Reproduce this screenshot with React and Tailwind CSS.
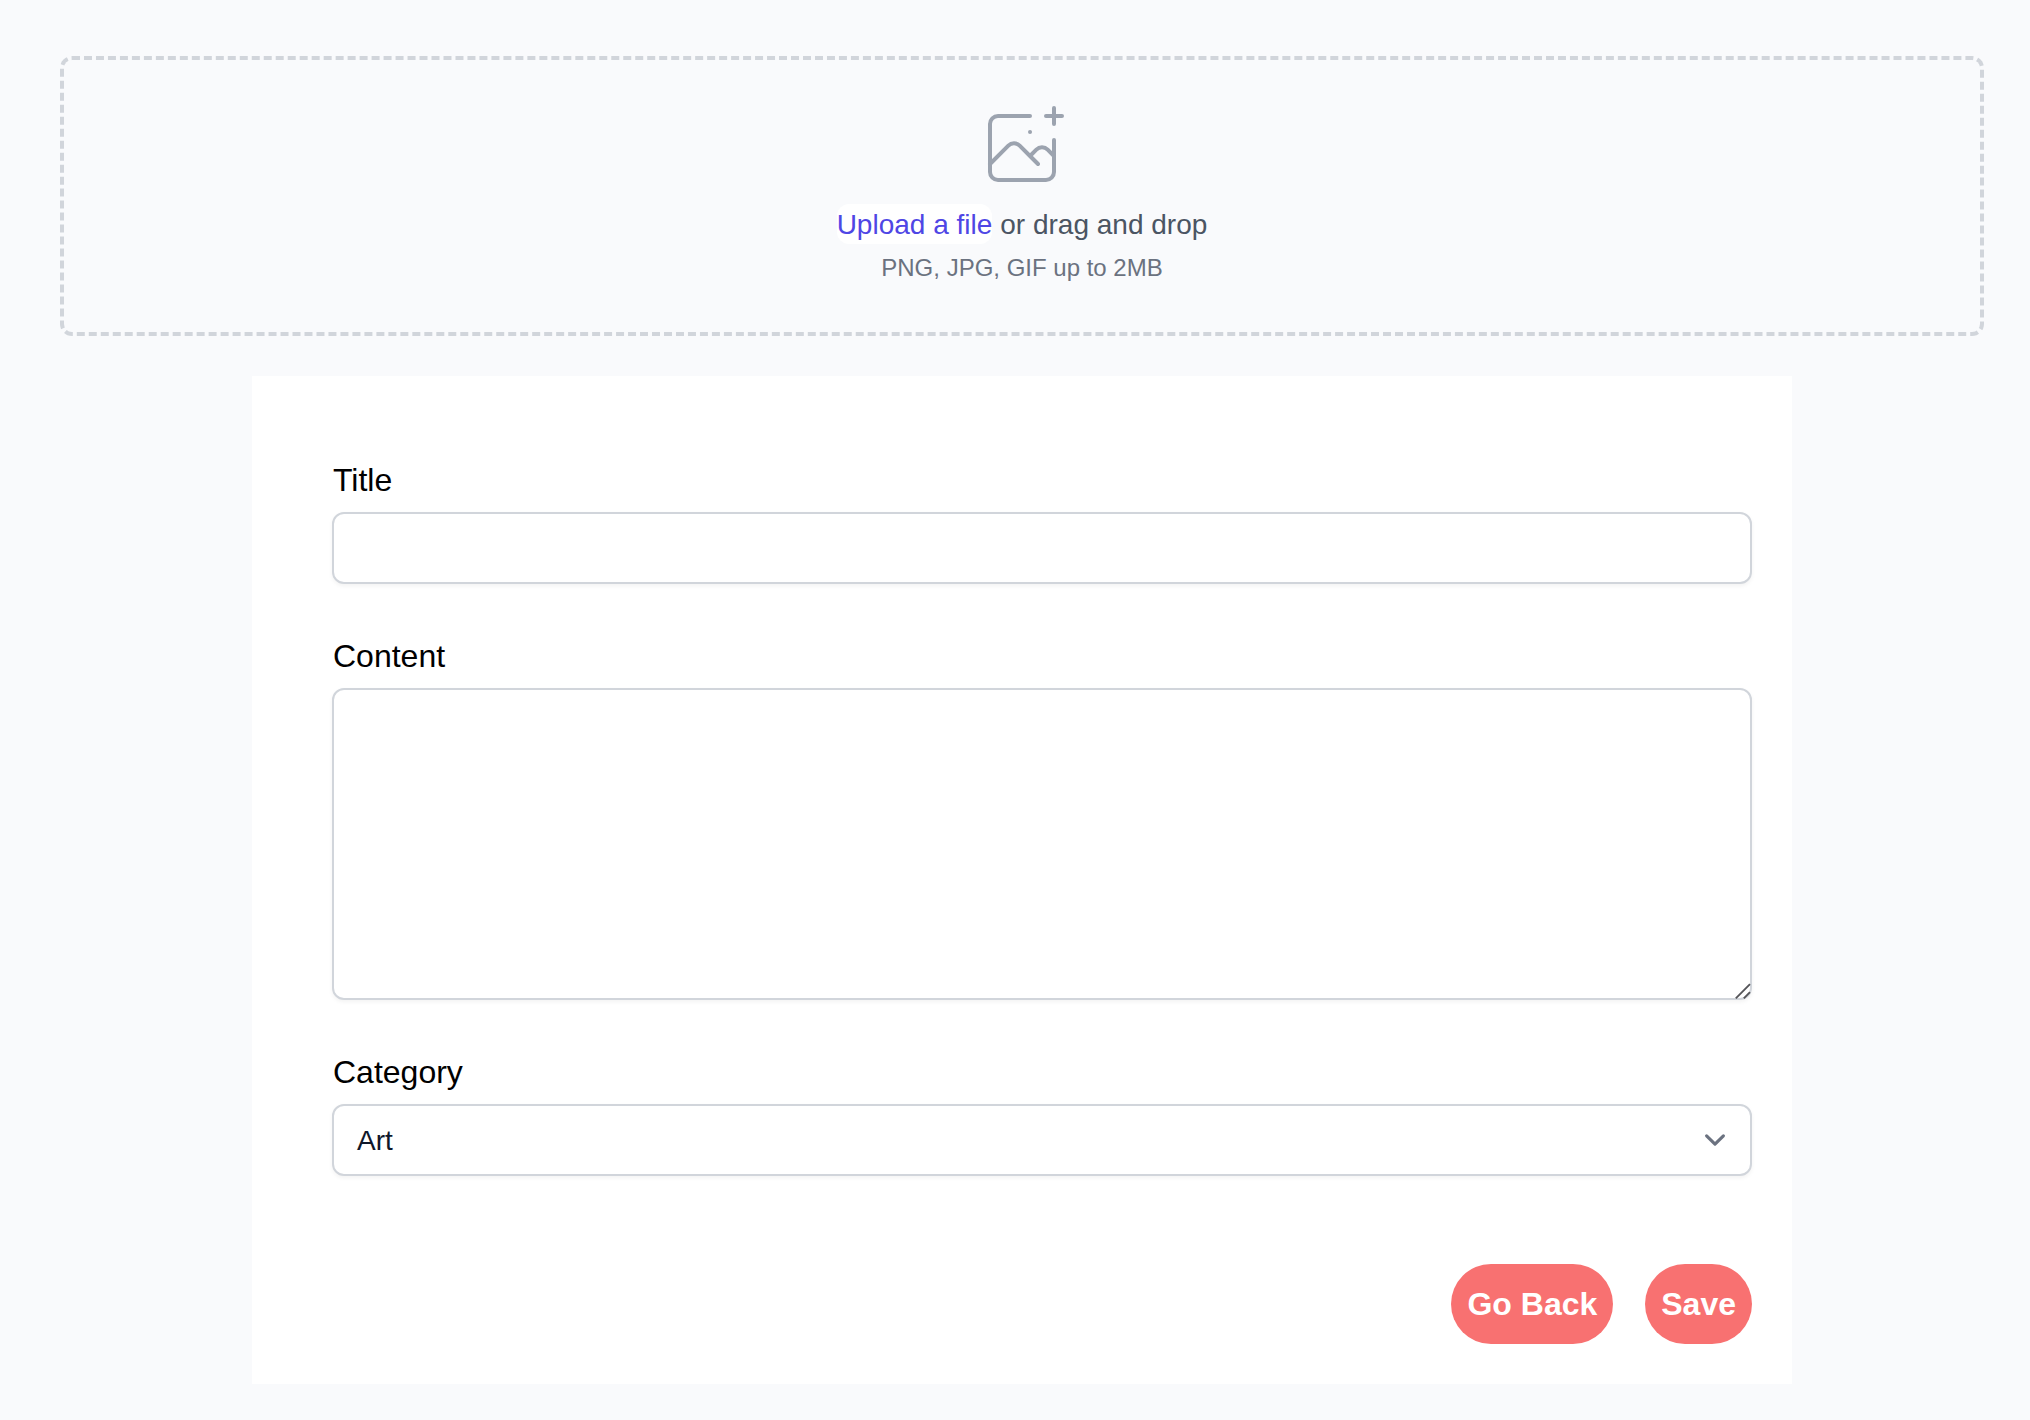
function Field({ label, children, className = "" }) {
  return (
    <div className={className}>
      <label className="block pl-px text-[32px] leading-[48px] text-black">{label}</label>
      <div className="mt-2">{children}</div>
    </div>
  );
}

function UploadArea() {
  return (
    <div className="flex h-[280px] flex-col items-center rounded-[12px] border-4 border-dashed border-[#d1d5db] pt-10">
      <svg
        className="size-24 shrink-0 text-[#9ca3af]"
        viewBox="0 0 48 48"
        fill="none"
        stroke="currentColor"
        strokeWidth="2"
        strokeLinecap="round"
        strokeLinejoin="round"
      >
        <path d="M28 8H12a4 4 0 00-4 4v20m32-12v8m0 0v8a4 4 0 01-4 4H12a4 4 0 01-4-4v-4m32-4l-3.172-3.172a4 4 0 00-5.656 0L28 28M8 32l9.172-9.172a4 4 0 015.656 0L28 28m0 0l4 4m4-24h8m-4-4v8m-12 4h.02" />
      </svg>
      <div className="mt-2 flex h-10 text-[28px] leading-[42px] text-[#4b5563]">
        <label className="h-10 cursor-pointer rounded-[12px] bg-white text-[#4f46e5]">Upload a file</label>
        <p className="pl-2">or drag and drop</p>
      </div>
      <p className="mt-2 text-[24px] leading-8 text-[#6b7280]">PNG, JPG, GIF up to 2MB</p>
    </div>
  );
}

export default function App() {
  return (
    <div className="min-h-[1420px] bg-[#f9fafc] pl-[60px] pr-[46px] pt-14 font-['Liberation_Sans',Arial,sans-serif]">
      <UploadArea />
      <form className="mx-auto mt-10 h-[1008px] w-[1540px] bg-white pl-20 pr-10 pt-20">
        <Field label="Title">
          <input
            type="text"
            className="block h-[72px] w-full rounded-[12px] border-2 border-[#d1d5db] bg-white px-6 text-[28px] shadow-[0_2px_4px_rgba(0,0,0,0.05)] outline-none"
          />
        </Field>
        <Field label="Content" className="mt-12">
          <div className="relative">
            <textarea className="block h-[312px] w-full resize-none rounded-[12px] border-2 border-[#d1d5db] bg-white px-6 py-4 text-[28px] shadow-[0_2px_4px_rgba(0,0,0,0.05)] outline-none" />
            <svg
              className="pointer-events-none absolute bottom-0 right-0 h-[17px] w-[17px]"
              viewBox="0 0 17 17"
              fill="none"
              stroke="#555559"
              strokeWidth="1.9"
            >
              <path d="M0.8 15.4L15 1.2M8.8 15.4L15 9.2" />
            </svg>
          </div>
        </Field>
        <Field label="Category" className="mt-12">
          <div className="flex h-[72px] items-center justify-between rounded-[12px] border-2 border-[#d1d5db] bg-white pl-[23px] pr-[14px] text-[28px] leading-10 text-[#0f172a] shadow-[0_2px_4px_rgba(0,0,0,0.05)]">
            <span className="pt-0.5">Art</span>
            <svg
              className="size-[42px]"
              viewBox="0 0 20 20"
              fill="none"
              stroke="#6b7280"
              strokeWidth="1.5"
              strokeLinecap="round"
              strokeLinejoin="round"
            >
              <path d="M6 8l4 4 4-4" />
            </svg>
          </div>
        </Field>
        <div className="mt-[88px] flex justify-end gap-8">
          <button type="button" className="h-20 rounded-[40px] bg-[#f87171] px-4 text-[32px] font-bold leading-[48px] text-white">
            Go Back
          </button>
          <button type="button" className="h-20 rounded-[40px] bg-[#f87171] px-4 text-[32px] font-bold leading-[48px] text-white">
            Save
          </button>
        </div>
      </form>
    </div>
  );
}
